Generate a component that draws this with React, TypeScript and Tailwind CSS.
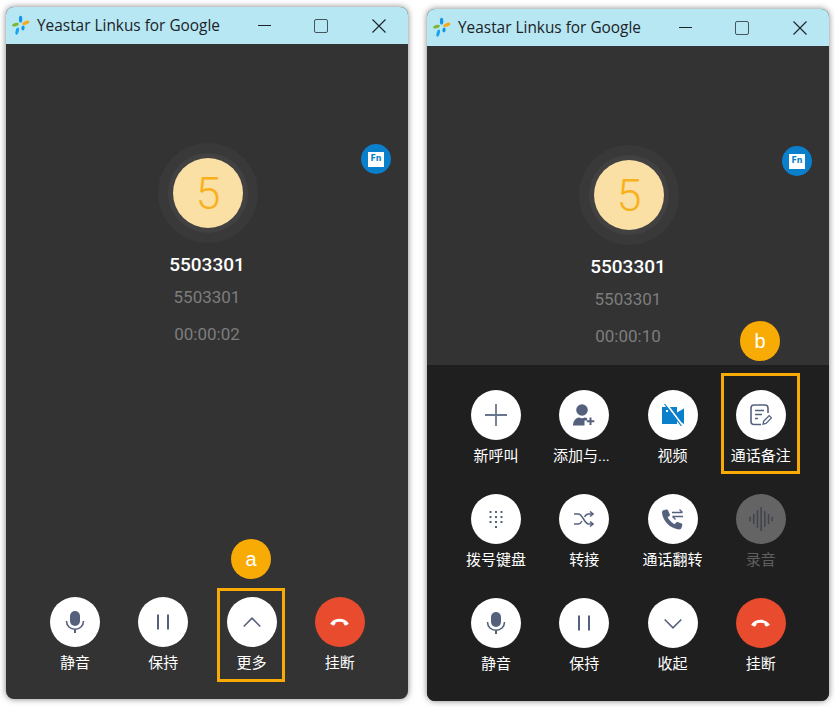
import type { ReactNode } from 'react'

const cjk = 'font-["Roboto","Noto_Sans_CJK_SC",sans-serif]'

function Logo() {
  return (
    <svg width="18" height="22" viewBox="0 0 18 22" className="shrink-0">
      <ellipse cx="8.6" cy="4.2" rx="1.7" ry="3.4" fill="#1296e8" />
      <ellipse cx="3.5" cy="9.6" rx="3.5" ry="1.6" fill="#7cb82f" transform="rotate(-14 3.5 9.6)" />
      <ellipse cx="13.8" cy="7.8" rx="3.7" ry="1.7" fill="#f5a91c" transform="rotate(-22 13.8 7.8)" />
      <ellipse cx="11" cy="13" rx="1.6" ry="2.4" fill="#1296e8" transform="rotate(14 11 13)" />
      <ellipse cx="5.2" cy="16.2" rx="1.6" ry="3.7" fill="#1ba4ee" transform="rotate(14 5.2 16.2)" />
    </svg>
  )
}

function TitleBar() {
  return (
    <div className="flex h-[37px] items-center bg-[#b6e7f3] pl-[6px] text-[#1c2226]">
      <Logo />
      <span className='ml-[7px] w-[221px] whitespace-nowrap font-["Open_Sans",sans-serif] text-[15.4px]'>
        Yeastar Linkus for Google
      </span>
      <div className="h-[1.5px] w-[13px] bg-[#1c2226]" />
      <div className="ml-[43px] h-[14px] w-[14px] rounded-[2px] border-[1.5px] border-[#46555a]" />
      <svg width="14" height="14" viewBox="0 0 14 14" className="ml-[44px]">
        <path d="M.5.5l13 13M13.5.5l-13 13" stroke="#1c2226" strokeWidth="1.1" fill="none" />
      </svg>
    </div>
  )
}

function Caller({ time }: { time: string }) {
  return (
    <div className="relative flex flex-col items-center pt-[99px]">
      <div className="ml-[2px] flex h-[100px] w-[100px] items-center justify-center rounded-full bg-[#393939]">
        <div className="flex h-[80px] w-[80px] items-center justify-center rounded-full bg-[#414141]">
          <div className='flex h-[70px] w-[70px] items-center justify-center rounded-full bg-[#fbe0a5] font-["Roboto",sans-serif] text-[45px] leading-none font-light text-[#f8b01c]'>
            5
          </div>
        </div>
      </div>
      <div className='mt-[10px] font-["Roboto",sans-serif] text-[19px] leading-[24px] font-medium text-white'>5503301</div>
      <div className='mt-[8px] font-["Roboto",sans-serif] text-[17px] leading-[24px] text-[#7d7d7d]'>5503301</div>
      <div className='mt-[13px] font-["Roboto",sans-serif] text-[17px] leading-[24px] text-[#7d7d7d]'>{time}</div>
      <div className="absolute top-[100px] right-[17px] flex h-[30px] w-[30px] items-center justify-center rounded-full bg-[#0a80cc]">
        <div className='flex h-[15px] w-[16px] items-center justify-center bg-white font-["DejaVu_Sans",sans-serif] text-[8px] font-bold text-[#0a80cc]'>
          Fn
        </div>
      </div>
    </div>
  )
}

const slate = '#55617c'

function Mic() {
  return (
    <svg width="20" height="24" viewBox="0 0 20 24">
      <rect x="5" y="1" width="10" height="15" rx="5" fill={slate} />
      <path d="M1.5 11c0 5 3.8 8.2 8.5 8.2s8.500-3.200 8.500-8.200" stroke={slate} strokeWidth="1.600" fill="none" />
      <rect x="9" y="19" width="2" height="4" fill={slate} />
    </svg>
  )
}

function Pause() {
  return (
    <svg width="14" height="16" viewBox="0 0 14 16">
      <rect x="1" y="0.500" width="2" height="15" fill={slate} />
      <rect x="11" y="0.500" width="2" height="15" fill={slate} />
    </svg>
  )
}

function Chevron({ down }: { down?: boolean }) {
  return (
    <svg width="18" height="11" viewBox="0 0 18 11">
      <path d={down ? 'M.7 1.500L9 9.800l8.300-8.300' : 'M.7 9.500L9 1.200l8.300 8.300'} stroke={slate} strokeWidth="1.600" fill="none" />
    </svg>
  )
}

function Hangup() {
  return (
    <svg width="19" height="8" viewBox="0 0 20 10" preserveAspectRatio="none">
      <path
        d="M0.500 6.500C3 2.500 6.500 1 10 1s7 1.500 9.500 5.500c.3.600.1 1.100-.4 1.400l-2.400 1.400c-.5.300-1 .1-1.300-.3l-1.200-2.200c-.2-.4-.1-.8.200-1.100C13 5 11.500 4.600 10 4.600S7 5 5.600 5.700c.3.300.4.700.2 1.100L4.600 9c-.3.400-.8.600-1.300.3L.9 7.900c-.5-.3-.7-.8-.4-1.400z"
        fill="#fff"
      />
    </svg>
  )
}

function Plus() {
  return (
    <svg width="22" height="22" viewBox="0 0 22 22">
      <path d="M11 0v22M0 11h22" stroke="#6a7690" strokeWidth="1.800" />
    </svg>
  )
}

function AddUser() {
  return (
    <svg width="22" height="22" viewBox="0 0 22 22">
      <circle cx="9" cy="6" r="5.800" fill={slate} />
      <path d="M0 21.500c0-4.500 2.800-7.500 6-8 2 1 4 1 6 0 .8.100 1.500.400 2.100.800v2.200h-2.600v5z" fill={slate} />
      <path d="M17.500 13.500v7.500M13.800 17.300h7.500" stroke={slate} strokeWidth="2" />
    </svg>
  )
}

function VideoOff() {
  return (
    <svg width="24" height="22" viewBox="0 0 24 22">
      <path d="M1 3h15v5.500L23 4.500v15.500L16 16v4H1z" fill="#0a80cc" />
      <rect x="5" y="6" width="2" height="2" fill="#fff" />
      <path d="M5 -0.500L22 22" stroke="#fff" strokeWidth="2" />
      <path d="M3.500 0L20.500 22" stroke="#0a80cc" strokeWidth="1.200" />
    </svg>
  )
}

function Note() {
  return (
    <svg width="22" height="22" viewBox="0 0 22 22" fill="none">
      <path d="M11 20.500H4a3 3 0 0 1-3-3V4a3 3 0 0 1 3-3h11a3 3 0 0 1 3 3v5" stroke={slate} strokeWidth="1.600" />
      <path d="M5 6.500h9M5 10.500h7M5 14.500h3" stroke={slate} strokeWidth="1.600" />
      <path d="M13 20.200l.7-3 5.500-5.600 2.300 2.300-5.500 5.600z" stroke={slate} strokeWidth="1.300" />
    </svg>
  )
}

function Dialpad() {
  const dots = [0, 1, 2, 3].flatMap((row) =>
    [0, 1, 2].map((col) => ({ row, col })).filter((d) => d.row < 3 || d.col === 1),
  )
  return (
    <svg width="14" height="18" viewBox="0 0 14 18">
      {dots.map((d) => (
        <rect key={`${d.row}-${d.col}`} x={d.col * 5.500 + 0.500} y={d.row * 5 + 1} width="2" height="2" fill={slate} />
      ))}
    </svg>
  )
}

function Shuffle() {
  return (
    <svg width="20" height="16" viewBox="0 0 20 16" fill="none" stroke={slate} strokeWidth="1.500">
      <path d="M0 3h4.500c4 0 6 10 10 10H19M0 13h4.500c1.500 0 2.600-1.300 3.500-3M10.500 6c.9-1.700 2-3 4-3H19" />
      <path d="M16 0.500L19 3l-3 2.500M16 10.500l3 2.500-3 2.500" />
    </svg>
  )
}

function CallFlip() {
  return (
    <svg width="22" height="22" viewBox="0 0 22 22">
      <path
        d="M4.500 1.500L1.500 2.300C.600 2.600 0 3.500 0 4.500 .6 13 8 20.500 17 21.500c1.200.1 2.200-.600 2.500-1.700l.8-2.700c.2-.6-.1-1.300-.7-1.500l-4-1.600c-.5-.2-1.100 0-1.500.4l-1.500 1.900C10 14.900 7 12 5.600 9.300L7.500 7.900c.5-.4.600-1 .4-1.500L6 2.200C5.700 1.600 5.100 1.300 4.500 1.500z"
        fill={slate}
      />
      <path d="M10 4.500h10.500M17.500 1.500l3 3M21 8.500H10.500M13.500 11.500l-3-3" stroke={slate} strokeWidth="1.300" fill="none" />
    </svg>
  )
}

function Wave() {
  const bars = [
    [1, 5],
    [5, 11],
    [9, 19],
    [13, 26],
    [17, 17],
    [21, 11],
    [25, 5],
  ]
  return (
    <svg width="24" height="26" viewBox="0 0 26 26">
      {bars.map(([x, h]) => (
        <rect key={x} x={x - 0.700} y={13 - h / 2} width="1.700" height={h} fill="#40454f" />
      ))}
    </svg>
  )
}

function CallButton({
  label,
  icon,
  tone = 'white',
  labelClass = '',
}: {
  label: string
  icon: ReactNode
  tone?: 'white' | 'red' | 'off'
  labelClass?: string
}) {
  const circle = tone === 'red' ? 'bg-[#e84b2e]' : tone === 'off' ? 'bg-[#646464]' : 'bg-white'
  const text = tone === 'off' ? 'text-[#5f5f5f]' : 'text-white'
  return (
    <div className="flex flex-col items-center">
      <div className={`flex h-[50px] w-[50px] items-center justify-center rounded-full ${circle}`}>{icon}</div>
      <div className={`mt-[5px] whitespace-nowrap text-[15px] leading-[22px] ${cjk} ${text} ${labelClass}`}>{label}</div>
    </div>
  )
}

function Callout({ letter, className }: { letter: string; className: string }) {
  return (
    <div className={`absolute flex flex-col items-center ${className}`}>
      <div className='flex h-[40px] w-[40px] items-center justify-center rounded-full bg-[#f9ab05] font-["Liberation_Sans",sans-serif] text-[20px] text-white'>
        {letter}
      </div>
    </div>
  )
}

function App() {
  return (
    <div className="flex h-[707px] w-[835px] items-start overflow-hidden bg-white">
      {/* collapsed call window */}
      <div className="relative mt-[7px] ml-[6px] flex h-[692px] w-[402px] flex-col overflow-hidden rounded-[8px] bg-[#333333] shadow-[0_0_6px_rgba(0,0,0,0.5)]">
        <TitleBar />
        <Caller time="00:00:02" />
        <div className="mt-auto grid grid-cols-4 pr-[24px] pb-[25px] pl-[25px]">
          <CallButton label="静音" icon={<Mic />} />
          <CallButton label="保持" icon={<Pause />} />
          <CallButton label="更多" icon={<Chevron />} />
          <CallButton label="挂断" icon={<Hangup />} tone="red" />
        </div>
        <Callout letter="a" className="top-[532px] left-[225px]" />
        <div className="absolute top-[581px] left-[211px] h-[94px] w-[68px] border-[3px] border-[#f9ab05]" />
      </div>

      {/* expanded call window */}
      <div className="relative mt-[9px] ml-[19px] flex h-[692px] w-[402px] flex-col overflow-hidden rounded-[8px] bg-[#333333] shadow-[0_0_6px_rgba(0,0,0,0.5)]">
        <TitleBar />
        <Caller time="00:00:10" />
        <div className="mt-auto grid h-[336px] grid-cols-4 content-start gap-y-[27px] bg-[#1f1f1f] pt-[25px] pr-[24px] pl-[25px]">
          <CallButton label="新呼叫" icon={<Plus />} />
          <CallButton label="添加与..." icon={<AddUser />} labelClass="mr-[6px]" />
          <CallButton label="视频" icon={<VideoOff />} />
          <CallButton label="通话备注" icon={<Note />} />
          <CallButton label="拨号键盘" icon={<Dialpad />} />
          <CallButton label="转接" icon={<Shuffle />} />
          <CallButton label="通话翻转" icon={<CallFlip />} />
          <CallButton label="录音" icon={<Wave />} tone="off" />
          <CallButton label="静音" icon={<Mic />} />
          <CallButton label="保持" icon={<Pause />} />
          <CallButton label="收起" icon={<Chevron down />} />
          <CallButton label="挂断" icon={<Hangup />} tone="red" />
        </div>
        <Callout letter="b" className="top-[312px] left-[313px]" />
        <div className="absolute top-[364px] left-[294px] h-[101px] w-[79px] border-[3px] border-[#f9ab05]" />
      </div>
    </div>
  )
}

export default App
